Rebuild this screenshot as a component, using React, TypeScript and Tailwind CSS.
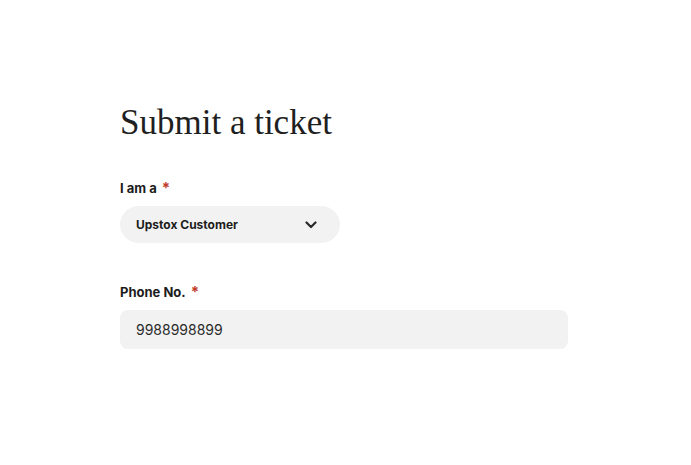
import * as React from "react";

function Label({ children }: { children: React.ReactNode }) {
  return (
    <label className="flex items-start gap-[5px] text-[13px] font-bold leading-4 text-[#1c1c1c]">
      {children}
      <span className="text-[15px] leading-4 text-[#c0392b]">*</span>
    </label>
  );
}

export default function App() {
  return (
    <div className="min-h-[465px] w-full bg-white font-['Inter','Liberation_Sans',sans-serif]">
      <div className="flex flex-col pl-[120px] pt-[102px]">
        <h1 className="font-['Liberation_Serif',serif] text-[35px] leading-[42px] text-[#1f1f1f]">
          Submit a ticket
        </h1>

        <div className="mt-[36px]">
          <Label>I am a</Label>
          <button className="mt-[10px] flex h-[37px] w-[220px] items-center justify-between rounded-full bg-[#f2f2f2] pl-4 pr-[23px] text-[12px] font-bold text-[#1c1c1c]">
            Upstox Customer
            <svg width="12" height="8" viewBox="0 0 12 8" fill="none">
              <path d="M1.5 1.5 6 6l4.5-4.5" stroke="#2a2a2a" strokeWidth="2.2" strokeLinecap="round" strokeLinejoin="round" />
            </svg>
          </button>
        </div>

        <div className="mt-[41px]">
          <Label>Phone No.</Label>
          <input
            readOnly
            value="9988998899"
            className="mt-[10px] h-[39px] w-[448px] rounded-lg bg-[#f2f2f2] px-4 text-[14px] text-[#2b2b2b] outline-none"
          />
        </div>
      </div>
    </div>
  );
}
